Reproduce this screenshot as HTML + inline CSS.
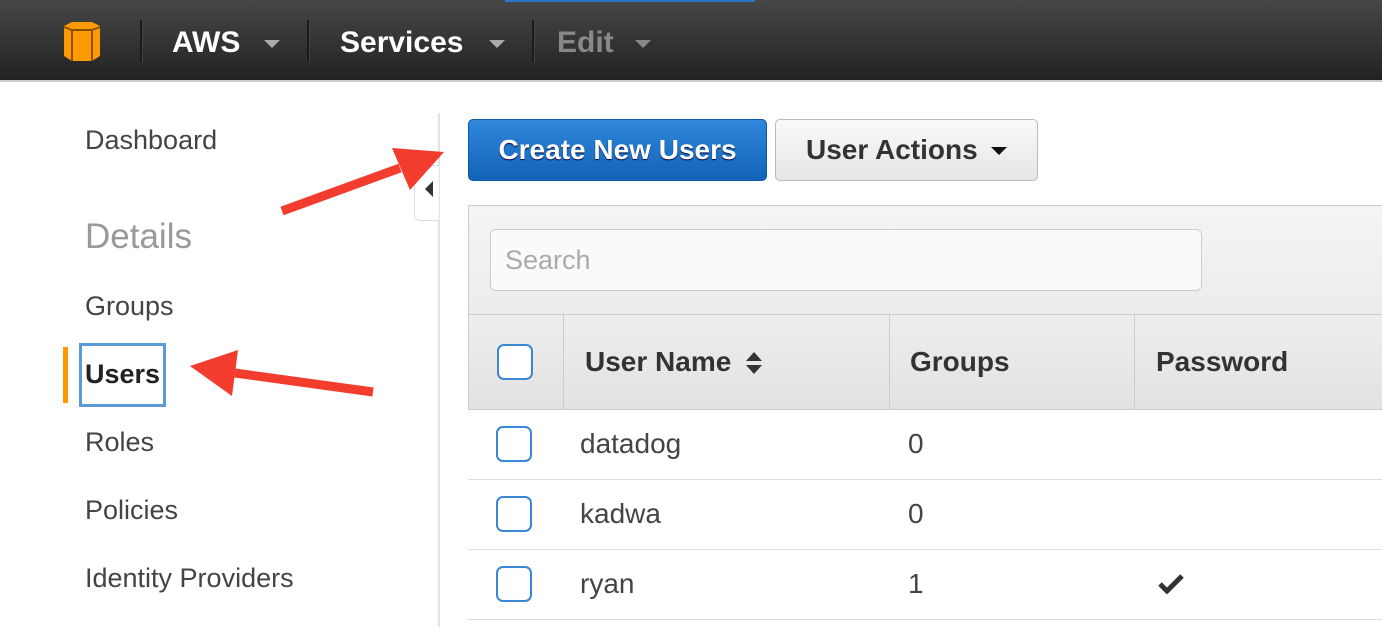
<!DOCTYPE html><html><head><style>
body{margin:0;width:1382px;height:627px;overflow:hidden;background:#fff;font-family:"Liberation Sans",sans-serif;position:relative}
.a{position:absolute}
.nav{left:0;top:0;width:1382px;height:80px;background:linear-gradient(#474747,#222);border-bottom:2px solid #ccc}
.nt{color:#fff;font-weight:bold;font-size:30px;top:26px}
.sep{top:20px;width:2px;height:42px;background:#1a1a1a;border-right:1px solid #444}
.car{width:0;height:0;border-left:8px solid transparent;border-right:8px solid transparent;border-top:8px solid #aaa;top:40px}
.side{color:#444;font-size:27px;left:85px}
.cb{width:36px;height:36px;border:2px solid #3b87d4;border-radius:7px;background:#fff;box-sizing:border-box}
.hd{font-size:28px;font-weight:bold;color:#333;top:346px}
.cell{font-size:28px;color:#444}
.hl{left:468px;width:914px;height:1px;background:#ddd}
</style></head><body>
<div class="a nav"></div>
<div class="a" style="left:505px;top:0;width:250px;height:2px;background:#2d74c9"></div>
<svg class="a" style="left:60px;top:20px" width="44" height="42" viewBox="0 0 44 42"><path d="M4 6 L12 2 L32 2 L40 6 L40 36 L32 41 L12 41 L4 36Z" fill="#f90"/><path d="M4 7 L12 10 L32 10 L40 7 M12 10 L12 41 M32 10 L32 41" stroke="#8a4f00" stroke-width="2" fill="none"/></svg>
<div class="a sep" style="left:140px"></div>
<div class="a nt" style="left:172px">AWS</div><div class="a car" style="left:264px"></div>
<div class="a sep" style="left:307px"></div>
<div class="a nt" style="left:340px">Services</div><div class="a car" style="left:489px"></div>
<div class="a sep" style="left:532px"></div>
<div class="a nt" style="left:557px;color:#888">Edit</div><div class="a car" style="left:635px;border-top-color:#888"></div>

<div class="a side" style="top:125px">Dashboard</div>
<div class="a side" style="top:217px;font-size:35px;color:#999">Details</div>
<div class="a side" style="top:291px">Groups</div>
<div class="a" style="left:63px;top:347px;width:5px;height:56px;background:#f90"></div>
<div class="a" style="left:79px;top:343px;width:87px;height:64px;border:3px solid #5b9bd5;box-sizing:border-box"></div>
<div class="a side" style="top:359px;font-weight:bold;color:#222">Users</div>
<div class="a side" style="top:427px">Roles</div>
<div class="a side" style="top:495px">Policies</div>
<div class="a side" style="top:563px">Identity Providers</div>
<div class="a" style="left:438px;top:113px;width:2px;height:514px;background:#e2e2e2"></div>
<div class="a" style="left:414px;top:165px;width:24px;height:54px;border:1px solid #ddd;border-right:none;border-radius:0 0 0 6px;background:#fff"></div>
<div class="a" style="left:425px;top:181px;border-top:8px solid transparent;border-bottom:8px solid transparent;border-right:8px solid #333"></div>

<div class="a" style="left:468px;top:119px;width:299px;height:62px;box-sizing:border-box;border:1px solid #0d5aa7;border-radius:5px;background:linear-gradient(#3087db,#1163b8);color:#fff;font-weight:bold;font-size:28px;text-align:center;line-height:60px;text-shadow:0 1px 1px #003">Create New Users</div>
<div class="a" style="left:775px;top:119px;width:263px;height:62px;box-sizing:border-box;border:1px solid #bbb;border-radius:5px;background:linear-gradient(#fafafa,#e5e5e5);color:#333;font-weight:bold;font-size:28px;line-height:60px;padding-left:30px">User Actions</div>
<div class="a" style="left:991px;top:147px;border-left:8px solid transparent;border-right:8px solid transparent;border-top:8px solid #111"></div>

<div class="a" style="left:468px;top:205px;width:914px;height:110px;background:linear-gradient(#f4f4f4,#ececec);border:1px solid #ccc;border-right:none;box-sizing:border-box"></div>
<div class="a" style="left:490px;top:229px;width:712px;height:62px;border:1px solid #ccc;border-radius:6px;background:#fafafa;box-sizing:border-box;color:#aaa;font-size:27px;line-height:60px;padding-left:14px">Search</div>
<div class="a" style="left:468px;top:315px;width:914px;height:95px;background:linear-gradient(#eee,#e2e2e2);border:1px solid #ccc;border-top:none;border-right:none;box-sizing:border-box"></div>
<div class="a" style="left:563px;top:315px;width:1px;height:94px;background:#ccc"></div>
<div class="a" style="left:889px;top:315px;width:1px;height:94px;background:#ccc"></div>
<div class="a" style="left:1134px;top:315px;width:1px;height:94px;background:#ccc"></div>
<div class="a cb" style="left:497px;top:344px"></div>
<div class="a hd" style="left:585px">User Name</div>
<svg class="a" style="left:745px;top:350px" width="18" height="26"><path d="M1 11 L9 2 L17 11Z M1 15 L9 24 L17 15Z" fill="#333"/></svg>
<div class="a hd" style="left:910px">Groups</div>
<div class="a hd" style="left:1156px">Password</div>

<div class="a cb" style="left:496px;top:426px"></div><div class="a cell" style="left:580px;top:428px">datadog</div><div class="a cell" style="left:908px;top:428px">0</div>
<div class="a hl" style="top:479px"></div>
<div class="a cb" style="left:496px;top:496px"></div><div class="a cell" style="left:580px;top:498px">kadwa</div><div class="a cell" style="left:908px;top:498px">0</div>
<div class="a hl" style="top:549px"></div>
<div class="a cb" style="left:496px;top:566px"></div><div class="a cell" style="left:580px;top:568px">ryan</div><div class="a cell" style="left:908px;top:568px">1</div>
<svg class="a" style="left:1158px;top:574px" width="26" height="20"><path d="M2 10 L9 17 L24 2" stroke="#333" stroke-width="5" fill="none"/></svg>
<div class="a hl" style="top:619px"></div>

<svg class="a" style="left:0;top:0" width="1382" height="627">
<line x1="282" y1="211" x2="400" y2="168" stroke="#f13c2e" stroke-width="9"/>
<path d="M444 152 L392 148 L410 190Z" fill="#f13c2e"/>
<line x1="373" y1="392" x2="235" y2="373" stroke="#f13c2e" stroke-width="9"/>
<path d="M190 366 L238 350 L232 396Z" fill="#f13c2e"/>
</svg>
</body></html>
